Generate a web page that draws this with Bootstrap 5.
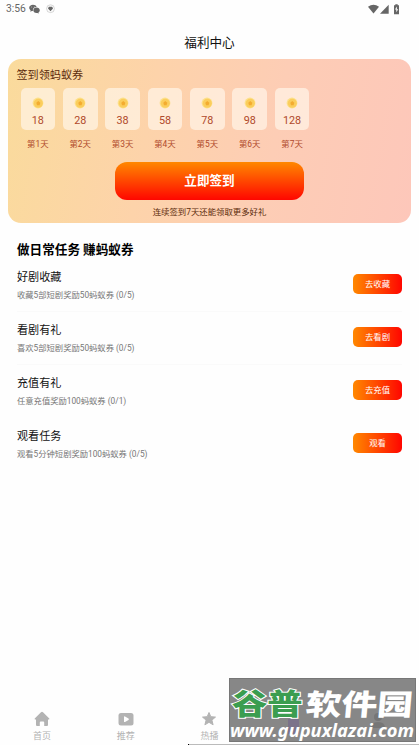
<!DOCTYPE html>
<html lang="zh-CN">
<head>
<meta charset="utf-8">
<meta name="viewport" content="width=device-width, initial-scale=1">
<title>福利中心</title>
<link href="https://cdn.jsdelivr.net/npm/bootstrap@5.3.0/dist/css/bootstrap.min.css" rel="stylesheet">
<style>
body{font-family:Roboto,"Noto Sans CJK SC",sans-serif;background:#fefefe;color:#111;height:745px;overflow:hidden}
.screen{height:745px}
.statusbar{height:18px;padding:0 19px 0 6px;font-size:10.3px;color:#666}
.statusbar svg,.coin,.tab svg{display:block}
.statusbar .signal{margin-right:-1px}
.statusbar .shield{margin-left:6px}
.statusbar .chat{margin-left:3px}
.page-title{height:41px;padding-top:15px;font-size:12.6px;line-height:20px}
.signin{height:164px;margin:0 8px;border-radius:13px;background:linear-gradient(100deg,#fadb9c 0%,#fdd3aa 35%,#fdcdb5 65%,#fdc7ba 100%);color:#5c2c0c}
.signin-title{font-size:11.1px;line-height:16px;padding:9px 0 0 8.5px}
.days{gap:7.7px;padding:4px 0 0 12.5px}
.day{width:34.7px;font-size:8.4px;color:#b0492b;line-height:12px}
.day-box{height:42px;border-radius:5px;background:rgba(255,246,235,.68);padding-top:9px;font-size:10.8px;line-height:14px;margin-bottom:8px}
.day-box .coin{margin-bottom:4.5px}
.btn-sign{width:189px;height:38px;border-radius:12px;background:linear-gradient(#ff8800,#ff0600);font-size:12.6px;line-height:38px;margin-top:11.5px}
.note{font-size:8.4px;line-height:12px;margin-top:6.5px}
.tasks{padding:0 17px}
.tasks h2{font-size:12.6px;line-height:18px;margin:18px 0 0;color:#000}
.task{height:53px;border-bottom:1px solid #fafafa}
.task-name{font-size:11.1px;line-height:16px;padding-top:11px}
.task-info{font-size:8.3px;line-height:12px;padding-top:3px;color:#777}
.btn-go{width:49px;height:20px;border-radius:5px;background:linear-gradient(90deg,#ff8800,#ff0600);font-size:8.4px;line-height:20px;margin-top:15px}
.tabs{height:34px}
.tab{font-size:9px;line-height:12px;color:#b3b3b3;width:20%}
.tab svg{margin-bottom:3px}
.stamp{left:229px;top:678px;width:187px;height:64px;background:rgba(105,105,105,.8);border:1px solid #777;color:#fff}
.stamp svg{display:block;overflow:visible}
.baseline{left:188px;top:744px;width:231px;height:1px;background:#bbb;border-left:1px solid #000}
</style>
</head>
<body>
<svg width="0" height="0" class="position-absolute">
<defs>
<symbol id="coin" viewBox="0 0 12 12"><circle cx="6" cy="6" r="5.400" fill="#fce08a"/><circle cx="6.300" cy="6.300" r="4.500" fill="#fbcd5c"/><path d="M6.300 4l2 1.700-.7 2.600H5l-.7-2.600z" fill="#f3ac30"/></symbol>
</defs>
</svg>
<div class="screen d-flex flex-column position-relative">
<header class="statusbar d-flex align-items-center flex-shrink-0">
<span>3:56</span>
<svg class="chat" width="11" height="10" viewBox="0 0 11 10" fill="#666"><path d="M4 .7C1.800.7.2 2 .2 3.800c0 1 .6 1.800 1.400 2.400L1.300 7.700l1.600-.8h1C3.500 4.600 5 3 7.600 3 7.200 1.600 5.800.7 4 .7z"/><path d="M7.500 3.500c-1.900 0-3.200 1.200-3.200 2.700s1.300 2.700 3.200 2.700h.8l1.500.7-.3-1.300c.8-.5 1.300-1.200 1.300-2.100 0-1.500-1.400-2.700-3.300-2.700z"/><circle cx="2.800" cy="3" r=".4" fill="#fff"/><circle cx="5.200" cy="3" r=".4" fill="#fff"/></svg>
<svg class="shield" width="10" height="10" viewBox="0 0 10 10"><circle cx="4.500" cy="4.700" r="3.900" fill="none" stroke="#bbb" stroke-width=".6"/><path d="M4.500 7.200L2 4.500 2.800 2.800h3.400l.8 1.700z" fill="#666"/></svg>
<svg class="signal ms-auto" width="33" height="11" viewBox="0 0 33 11" fill="#666"><path d="M0 2.700Q5.500-1 11 2.700L5.500 9.500z"/><path d="M12 9.800L20.700.8V9.800z"/><path d="M26 1.200h1.300V.2h2.400v1H31v9h-5z"/><path d="M28.900 2.500l-1.900 3h1.300v2.700l1.900-3h-1.300z" fill="#fff"/></svg>
</header>
<h1 class="page-title text-center fw-normal m-0 flex-shrink-0">福利中心</h1>
<section class="signin flex-shrink-0">
<div class="signin-title">签到领蚂蚁券</div>
<div class="days d-flex text-center">
<div class="day"><div class="day-box"><svg class="coin mx-auto" width="12" height="12"><use href="#coin"/></svg>18</div>第1天</div>
<div class="day"><div class="day-box"><svg class="coin mx-auto" width="12" height="12"><use href="#coin"/></svg>28</div>第2天</div>
<div class="day"><div class="day-box"><svg class="coin mx-auto" width="12" height="12"><use href="#coin"/></svg>38</div>第3天</div>
<div class="day"><div class="day-box"><svg class="coin mx-auto" width="12" height="12"><use href="#coin"/></svg>58</div>第4天</div>
<div class="day"><div class="day-box"><svg class="coin mx-auto" width="12" height="12"><use href="#coin"/></svg>78</div>第5天</div>
<div class="day"><div class="day-box"><svg class="coin mx-auto" width="12" height="12"><use href="#coin"/></svg>98</div>第6天</div>
<div class="day"><div class="day-box"><svg class="coin mx-auto" width="12" height="12"><use href="#coin"/></svg>128</div>第7天</div>
</div>
<button class="btn-sign btn d-block mx-auto p-0 border-0 text-white fw-bold">立即签到</button>
<div class="note text-center">连续签到7天还能领取更多好礼</div>
</section>
<main class="tasks flex-grow-1">
<h2 class="fw-bold">做日常任务 赚蚂蚁券</h2>
<div class="task d-flex justify-content-between align-items-start"><div><div class="task-name">好剧收藏</div><div class="task-info">收藏5部短剧奖励50蚂蚁券 (0/5)</div></div><button class="btn btn-go p-0 border-0 text-white">去收藏</button></div>
<div class="task d-flex justify-content-between align-items-start"><div><div class="task-name">看剧有礼</div><div class="task-info">喜欢5部短剧奖励50蚂蚁券 (0/5)</div></div><button class="btn btn-go p-0 border-0 text-white">去看剧</button></div>
<div class="task d-flex justify-content-between align-items-start border-0"><div><div class="task-name">充值有礼</div><div class="task-info">任意充值奖励100蚂蚁券 (0/1)</div></div><button class="btn btn-go p-0 border-0 text-white">去充值</button></div>
<div class="task d-flex justify-content-between align-items-start border-0"><div><div class="task-name">观看任务</div><div class="task-info">观看5分钟短剧奖励100蚂蚁券 (0/5)</div></div><button class="btn btn-go p-0 border-0 text-white">观看</button></div>
</main>
<nav class="tabs d-flex text-center flex-shrink-0">
<div class="tab"><svg class="mx-auto" width="16" height="16" viewBox="0 0 16 16" fill="#b3b3b3"><path d="M8 .8Q8.500.8 9 1.300L15.300 7.500Q15.700 8.300 14.800 8.500H14v5.500q0 1-1 1h-2.800v-3.500q0-1-1-1H6.800q-1 0-1 1V15H3q-1 0-1-1V8.500h-.8Q.3 8.300.7 7.500L7 1.300Q7.500.8 8 .8z"/></svg>首页</div>
<div class="tab"><svg class="mx-auto" width="16" height="16" viewBox="0 0 16 16"><rect x=".5" y="2" width="15" height="12.500" rx="2.500" fill="#b3b3b3"/><path d="M6 6q0-1 1-.5l3.500 2q.8.700 0 1.400l-3.500 2q-1 .500-1-.5z" fill="#fff"/></svg>推荐</div>
<div class="tab"><svg class="mx-auto" width="16" height="16" viewBox="0 0 16 16" fill="#b3b3b3" stroke="#b3b3b3" stroke-linejoin="round"><path d="M8 1.500l1.800 4.200 4.700.4-3.600 3 1.200 4.700L8 11.300l-4.100 2.500 1.200-4.700-3.600-3 4.700-.4z"/></svg>热播</div>
<div class="tab"></div><div class="tab"></div>
</nav>
<div class="stamp position-absolute">
<svg width="185" height="62" viewBox="0 0 185 62">
<path d="M60 34h8v5h-8zM58 40h11v15H58z" fill="#73648c" opacity=".6"/>
<g fill="#666" opacity=".5"><circle cx="148" cy="38" r="4"/><path d="M141 49q0-6 7-6t7 6z"/></g>
<g font-family="Noto Sans CJK SC,sans-serif" font-weight="900" font-size="29">
<text transform="translate(2 35.500) scale(1.220 1)" fill="#3b9d50" stroke="#fff" stroke-width="2" paint-order="stroke">谷普</text>
<text transform="translate(75 35.500) skewX(-5) scale(1.230 1)" fill="#fff">软件园</text></g>
<text x="0" y="57.500" font-family="Noto Sans,sans-serif" font-weight="700" font-style="italic" font-size="17.500" textLength="184" lengthAdjust="spacingAndGlyphs" fill="#fff">www.gupuxlazai.com</text>
</svg></div>
<div class="baseline position-absolute"></div>
</div>
<script src="https://cdn.jsdelivr.net/npm/bootstrap@5.3.0/dist/js/bootstrap.bundle.min.js"></script>
</body>
</html>
